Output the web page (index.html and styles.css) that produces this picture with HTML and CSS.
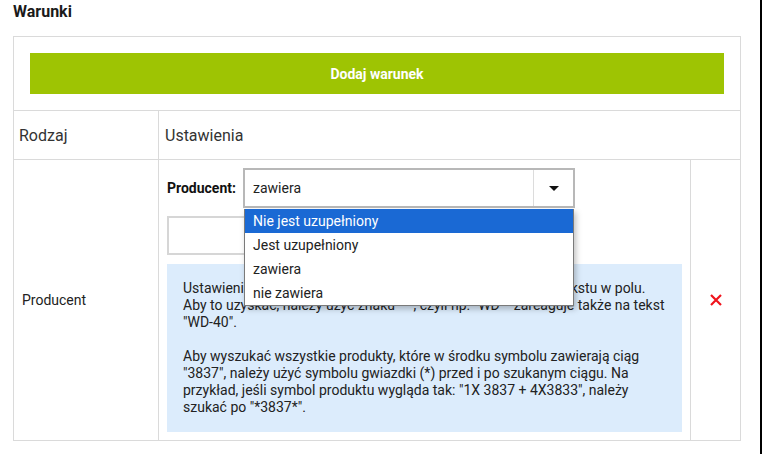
FILE: index.html
```html
<!DOCTYPE html>
<html lang="pl">
<head>
<meta charset="utf-8">
<title>Warunki</title>
<link rel="stylesheet" href="styles.css">
</head>
<body>
<div class="page">
  <h2 class="title">Warunki</h2>
  <table class="conditions">
    <colgroup>
      <col class="c1"><col class="c2"><col class="c3">
    </colgroup>
    <tr>
      <td colspan="3" class="btn-cell"><button class="add-btn">Dodaj warunek</button></td>
    </tr>
    <tr class="head">
      <td>Rodzaj</td>
      <td colspan="2">Ustawienia</td>
    </tr>
    <tr class="data">
      <td class="kind">Producent</td>
      <td class="settings">
        <div class="field-row">
          <span class="label">Producent:</span>
          <div class="select-wrap">
            <div class="select">
              <span class="select-value">zawiera</span>
              <span class="select-arrow"><span class="tri"></span></span>
            </div>
            <ul class="options">
              <li class="active">Nie jest uzupełniony</li>
              <li>Jest uzupełniony</li>
              <li>zawiera</li>
              <li>nie zawiera</li>
            </ul>
          </div>
        </div>
        <div class="input"></div>
        <div class="info">
          Ustawienie "zawiera" znaczy: wyszukanie danego fragmentu tekstu w polu.<br>
          Aby to uzyskać, należy użyć znaku "*", czyli np. "WD*" zareaguje także na tekst "WD-40".<br><br>
          Aby wyszukać wszystkie produkty, które w środku symbolu zawierają ciąg "3837", należy użyć symbolu gwiazdki (*) przed i po szukanym ciągu. Na przykład, jeśli symbol produktu wygląda tak: "1X 3837 + 4X3833", należy szukać po "*3837*".
        </div>
      </td>
      <td class="remove">
        <svg class="x" width="12" height="12" viewBox="0 0 12 12"><path d="M1 1 L11 11 M11 1 L1 11" stroke="#f0141c" stroke-width="2.2" fill="none"/></svg>
      </td>
    </tr>
  </table>
</div>
</body>
</html>
```

FILE: styles.css
```css
html, body {
  margin: 0;
  padding: 0;
  background: #fff;
}
body {
  font-family: Roboto, "Liberation Sans", Arial, sans-serif;
  color: #222;
  width: 762px;
  min-height: 454px;
  box-sizing: border-box;
  border-right: 2px solid #000;
}
.page {
  padding: 2px 0 0 13px;
}
.title {
  margin: 0 0 15px 0;
  font-size: 16px;
  line-height: 19px;
  font-weight: 700;
  color: #1a1a1a;
}
.conditions {
  border-collapse: collapse;
  table-layout: fixed;
  width: 727px;
}
.c1 { width: 145px; }
.c2 { width: 532px; }
.c3 { width: 50px; }
.conditions td {
  border: 1px solid #dadada;
  padding: 0;
}
.btn-cell {
  padding: 16px !important;
}
.add-btn {
  display: block;
  width: 100%;
  height: 41px;
  border: 0;
  margin: 0;
  background: #9ec403;
  color: #fff;
  font-family: Roboto, "Liberation Sans", Arial, sans-serif;
  font-size: 14px;
  font-weight: 700;
}
.head td {
  height: 48px;
  font-size: 16px;
  color: #333;
  vertical-align: middle;
  padding-left: 6px;
}
.head td:first-child {
  padding-left: 5px;
}
.kind {
  vertical-align: middle;
  font-size: 14px;
  padding-left: 8px !important;
  color: #222;
}
.settings {
  padding: 8px !important;
  vertical-align: top;
}
.field-row {
  display: flex;
  align-items: center;
}
.label {
  font-size: 14px;
  font-weight: 700;
  width: 76px;
  color: #111;
}
.select-wrap {
  position: relative;
}
.select {
  box-sizing: border-box;
  width: 332px;
  height: 40px;
  border: 2px solid #b8b8b8;
  display: flex;
  align-items: center;
  background: #fff;
}
.select-value {
  flex: 1;
  padding-left: 8px;
  font-size: 14px;
  color: #222;
}
.select-arrow {
  width: 39px;
  height: 100%;
  border-left: 1px solid #dcdcdc;
  display: flex;
  align-items: center;
  justify-content: center;
}
.tri {
  width: 0;
  height: 0;
  border-left: 5px solid transparent;
  border-right: 5px solid transparent;
  border-top: 5px solid #111;
  margin-top: 1px;
}
.options {
  position: absolute;
  left: 1px;
  top: 41px;
  width: 330px;
  box-sizing: border-box;
  margin: 0;
  padding: 0;
  list-style: none;
  background: #fff;
  border: 1px solid #7a7a7a;
  border-top: 0;
  box-shadow: 2px 3px 6px rgba(0,0,0,0.25);
  z-index: 5;
}
.options li {
  height: 24px;
  line-height: 24px;
  padding-left: 8px;
  font-size: 14px;
  color: #222;
}
.options li.active {
  background: #1a69d4;
  color: #fff;
}
.input {
  margin-top: 8px;
  width: 400px;
  height: 39px;
  box-sizing: border-box;
  border: 2px solid #d6d6d6;
}
.info {
  margin-top: 9px;
  background: #dcecfc;
  padding: 16px;
  font-size: 14px;
  line-height: 17px;
  color: #222;
}
.remove {
  vertical-align: middle;
  text-align: center;
}
.x {
  display: block;
  margin: 0 auto;
}
```
